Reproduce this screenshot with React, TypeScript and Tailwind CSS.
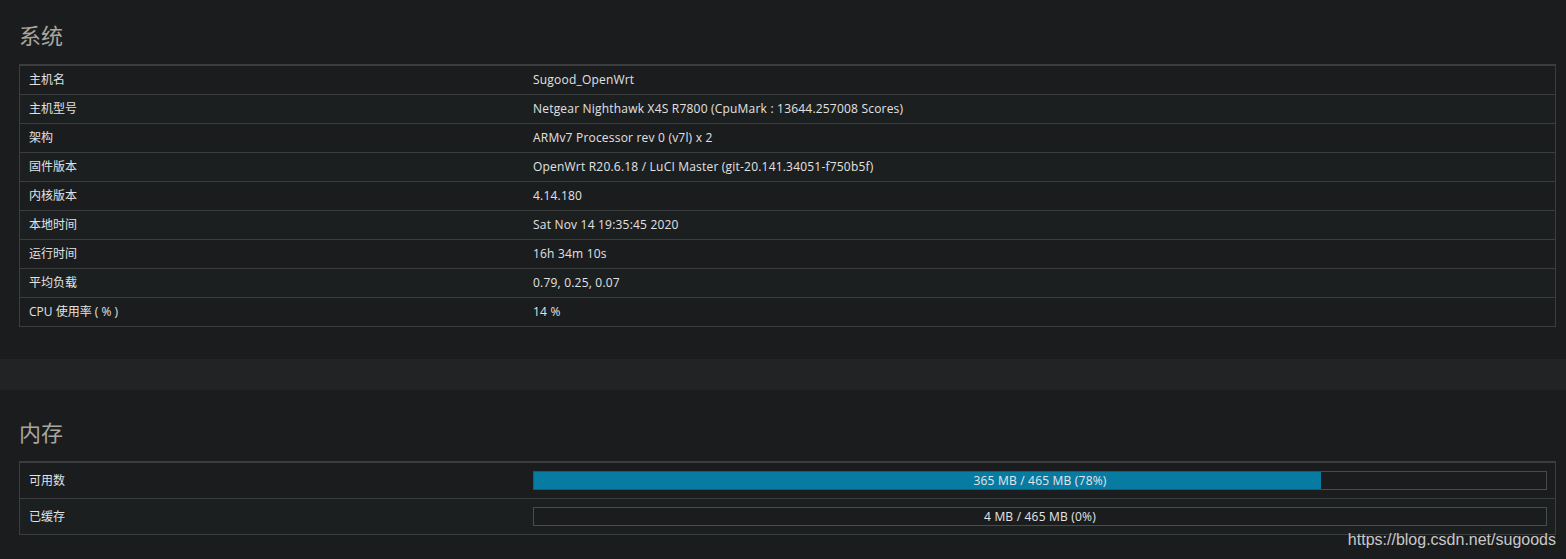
import React from "react";

const sys: [string, string][] = [
  ["主机名", "Sugood_OpenWrt"],
  ["主机型号", "Netgear Nighthawk X4S R7800 (CpuMark : 13644.257008 Scores)"],
  ["架构", "ARMv7 Processor rev 0 (v7l) x 2"],
  ["固件版本", "OpenWrt R20.6.18 / LuCI Master (git-20.141.34051-f750b5f)"],
  ["内核版本", "4.14.180"],
  ["本地时间", "Sat Nov 14 19:35:45 2020"],
  ["运行时间", "16h 34m 10s"],
  ["平均负载", "0.79, 0.25, 0.07"],
  ["CPU 使用率 ( % )", "14 %"],
];

const font = { fontFamily: '"Open Sans", "Noto Sans CJK SC", sans-serif' };

function Bar({ pct, label }: { pct: number; label: string }) {
  return (
    <div className="relative h-[19px] border border-[#4a4b4d] bg-[#1b1c1e]">
      <div className="h-full bg-[#087ba3]" style={{ width: `${pct}%` }} />
      <div className="absolute inset-0 flex items-center justify-center text-[12px] tracking-[0.2px] text-[#e6e6e6]">
        {label}
      </div>
    </div>
  );
}

export default function App() {
  return (
    <div className="min-h-[559px] w-full bg-[#1b1c1e] text-[#e2e2e2] relative" style={font}>
      <div className="pl-[19px] pr-[10px] pt-[20px] pb-[32px]">
        <h2 className="text-[22px] leading-[30px] text-[#a9a59f] mb-[14px]">系统</h2>
        <div className="border-x border-b border-[#3c3d3f] border-t-2 border-t-[#3c3d3f]">
          {sys.map(([k, v], i) => (
            <div
              key={k}
              className={`flex items-center text-[12px] ${i > 0 ? "border-t border-[#3c3d3f] h-[29px]" : "h-[28px]"} ${i % 2 === 1 ? "bg-[#1c1f20]" : "bg-[#1b1c1e]"}`}
            >
              <div className="w-[513px] pl-[9px]">{k}</div>
              <div className="flex-1 tracking-[0.2px]">{v}</div>
            </div>
          ))}
        </div>
      </div>
      <div className="h-[31px] bg-[#222325]" />
      <div className="pl-[19px] pr-[10px] pt-[27px] pb-[24px]">
        <h2 className="text-[22px] leading-[30px] text-[#a9a59f] mb-[14px]">内存</h2>
        <div className="border-x border-b border-[#3c3d3f] border-t-2 border-t-[#3c3d3f]">
          <div className="flex h-[35px] items-center text-[12px] bg-[#1b1c1e]">
            <div className="w-[513px] pl-[9px]">可用数</div>
            <div className="flex-1 pr-[8px]">
              <Bar pct={77.8} label="365 MB / 465 MB (78%)" />
            </div>
          </div>
          <div className="flex h-[36px] items-center text-[12px] border-t border-[#3c3d3f] bg-[#1c1f20]">
            <div className="w-[513px] pl-[9px]">已缓存</div>
            <div className="flex-1 pr-[8px]">
              <Bar pct={0} label="4 MB / 465 MB (0%)" />
            </div>
          </div>
        </div>
      </div>
      <div
        className="absolute right-[10px] bottom-[10px] text-[16px] leading-[18px] text-[#c8c8c8]"
        style={{ fontFamily: '"Liberation Sans", Arial, sans-serif' }}
      >
        https://blog.csdn.net/sugoods
      </div>
    </div>
  );
}
